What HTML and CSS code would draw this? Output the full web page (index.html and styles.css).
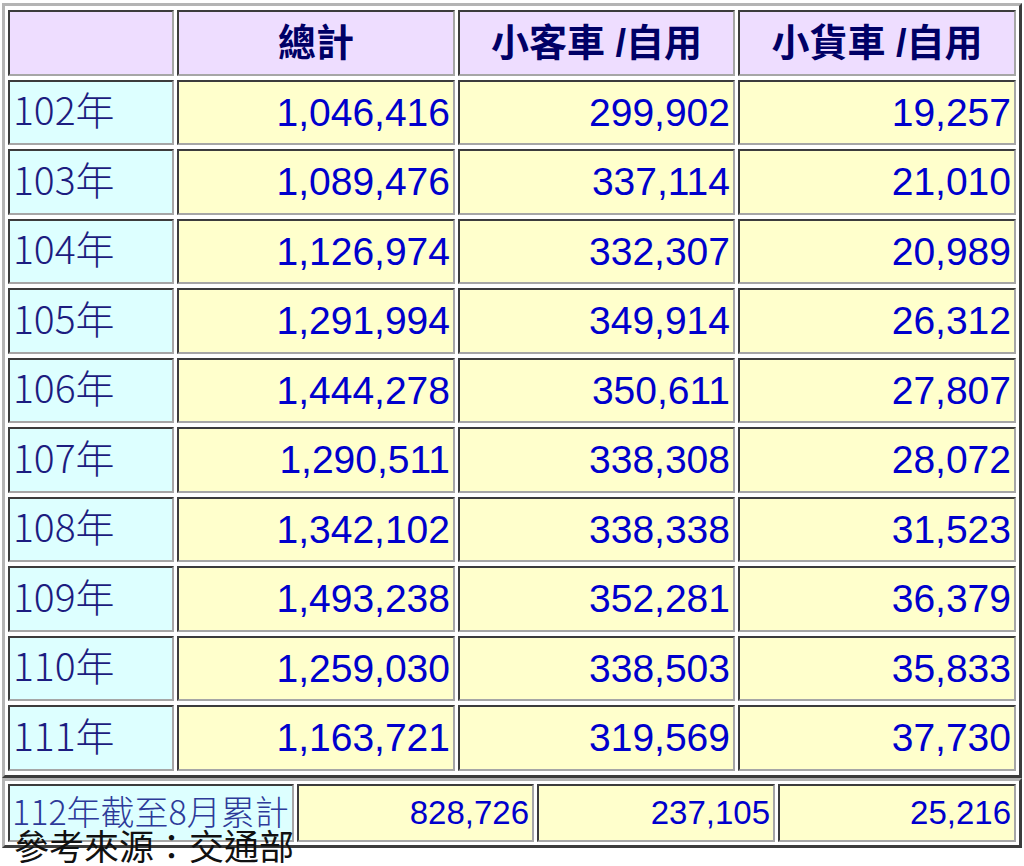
FILE: index.html
```html
<!DOCTYPE html>
<html lang="zh-Hant">
<head>
<meta charset="utf-8">
<title>統計</title>
<link rel="stylesheet" href="styles.css">
</head>
<body>
<table class="grid main">
  <colgroup>
    <col class="c1"><col class="c2"><col class="c3"><col class="c4">
  </colgroup>
  <thead>
    <tr class="head">
      <th></th><th>總計</th><th>小客車 /自用</th><th>小貨車 /自用</th>
    </tr>
  </thead>
  <tbody>
    <tr><td class="yr">102年</td><td class="num">1,046,416</td><td class="num">299,902</td><td class="num">19,257</td></tr>
    <tr><td class="yr">103年</td><td class="num">1,089,476</td><td class="num">337,114</td><td class="num">21,010</td></tr>
    <tr><td class="yr">104年</td><td class="num">1,126,974</td><td class="num">332,307</td><td class="num">20,989</td></tr>
    <tr><td class="yr">105年</td><td class="num">1,291,994</td><td class="num">349,914</td><td class="num">26,312</td></tr>
    <tr><td class="yr">106年</td><td class="num">1,444,278</td><td class="num">350,611</td><td class="num">27,807</td></tr>
    <tr><td class="yr">107年</td><td class="num">1,290,511</td><td class="num">338,308</td><td class="num">28,072</td></tr>
    <tr><td class="yr">108年</td><td class="num">1,342,102</td><td class="num">338,338</td><td class="num">31,523</td></tr>
    <tr><td class="yr">109年</td><td class="num">1,493,238</td><td class="num">352,281</td><td class="num">36,379</td></tr>
    <tr><td class="yr">110年</td><td class="num">1,259,030</td><td class="num">338,503</td><td class="num">35,833</td></tr>
    <tr><td class="yr">111年</td><td class="num">1,163,721</td><td class="num">319,569</td><td class="num">37,730</td></tr>
  </tbody>
</table>
<table class="grid sub">
  <colgroup>
    <col class="d1"><col class="d2"><col class="d3"><col class="d4">
  </colgroup>
  <tbody>
    <tr><td class="yr">112年截至8月累計</td><td class="num">828,726</td><td class="num">237,105</td><td class="num">25,216</td></tr>
  </tbody>
</table>
<p class="source">參考來源：交通部</p>
</body>
</html>
```

FILE: styles.css
```css
html, body {
  margin: 0;
  padding: 0;
  background: #ffffff;
}
body {
  padding: 3px 2px 0 2px;
  font-family: "Liberation Sans", "Noto Sans CJK TC", sans-serif;
}
.grid {
  width: 1020px;
  table-layout: fixed;
  border-collapse: separate;
  border-style: solid;
  border-width: 3px;
  border-color: #b4b4b4 #3c3c3c #3c3c3c #b4b4b4;
}
.main {
  border-spacing: 3px 4px;
}
.sub {
  margin-top: 0;
  border-spacing: 3px;
}
.grid th,
.grid td {
  box-sizing: border-box;
  border-style: solid;
  border-width: 2px;
  border-color: #3c3c3c #a6a6a6 #a6a6a6 #3c3c3c;
  padding: 0;
  white-space: nowrap;
  overflow: hidden;
}
.c1 { width: 166px; }
.c2 { width: 278px; }
.c3 { width: 277px; }
.c4 { width: 278px; }
.d1 { width: 286px; }
.d2 { width: 237px; }
.d3 { width: 238px; }
.d4 { width: 238px; }

.main tr { height: 65.5px; }
.sub tr { height: 58px; }

.head th {
  background: #eeddff;
  color: #000066;
  font-family: "Liberation Sans", "Noto Sans CJK TC", sans-serif;
  font-weight: 700;
  font-size: 38px;
  text-align: center;
  vertical-align: middle;
  line-height: 1;
}
.head .gap {
  display: inline-block;
  width: 0.2em;
}
.yr {
  background: #ddffff;
  color: #1c1c80;
  font-family: "Noto Sans CJK TC", sans-serif;
  font-weight: 300;
  font-size: 39px;
  text-align: left;
  padding: 0 0 7px 3px !important;
  vertical-align: middle;
  line-height: 1;
}
.num {
  background: #ffffcc;
  color: #0000cc;
  font-family: "Liberation Sans", sans-serif;
  font-size: 39px;
  text-align: right;
  padding: 0 3px 0 0 !important;
  vertical-align: middle;
  line-height: 1;
}
.sub .yr {
  color: #2d3a99;
  font-size: 34px;
  padding: 0 0 4px 2px !important;
}
.sub .num {
  font-size: 33px;
}
.source {
  margin: -21px 0 0 12px;
  font-family: "Noto Sans CJK TC", sans-serif;
  font-weight: 400;
  font-size: 35px;
  line-height: 36px;
  color: #111111;
}
```
